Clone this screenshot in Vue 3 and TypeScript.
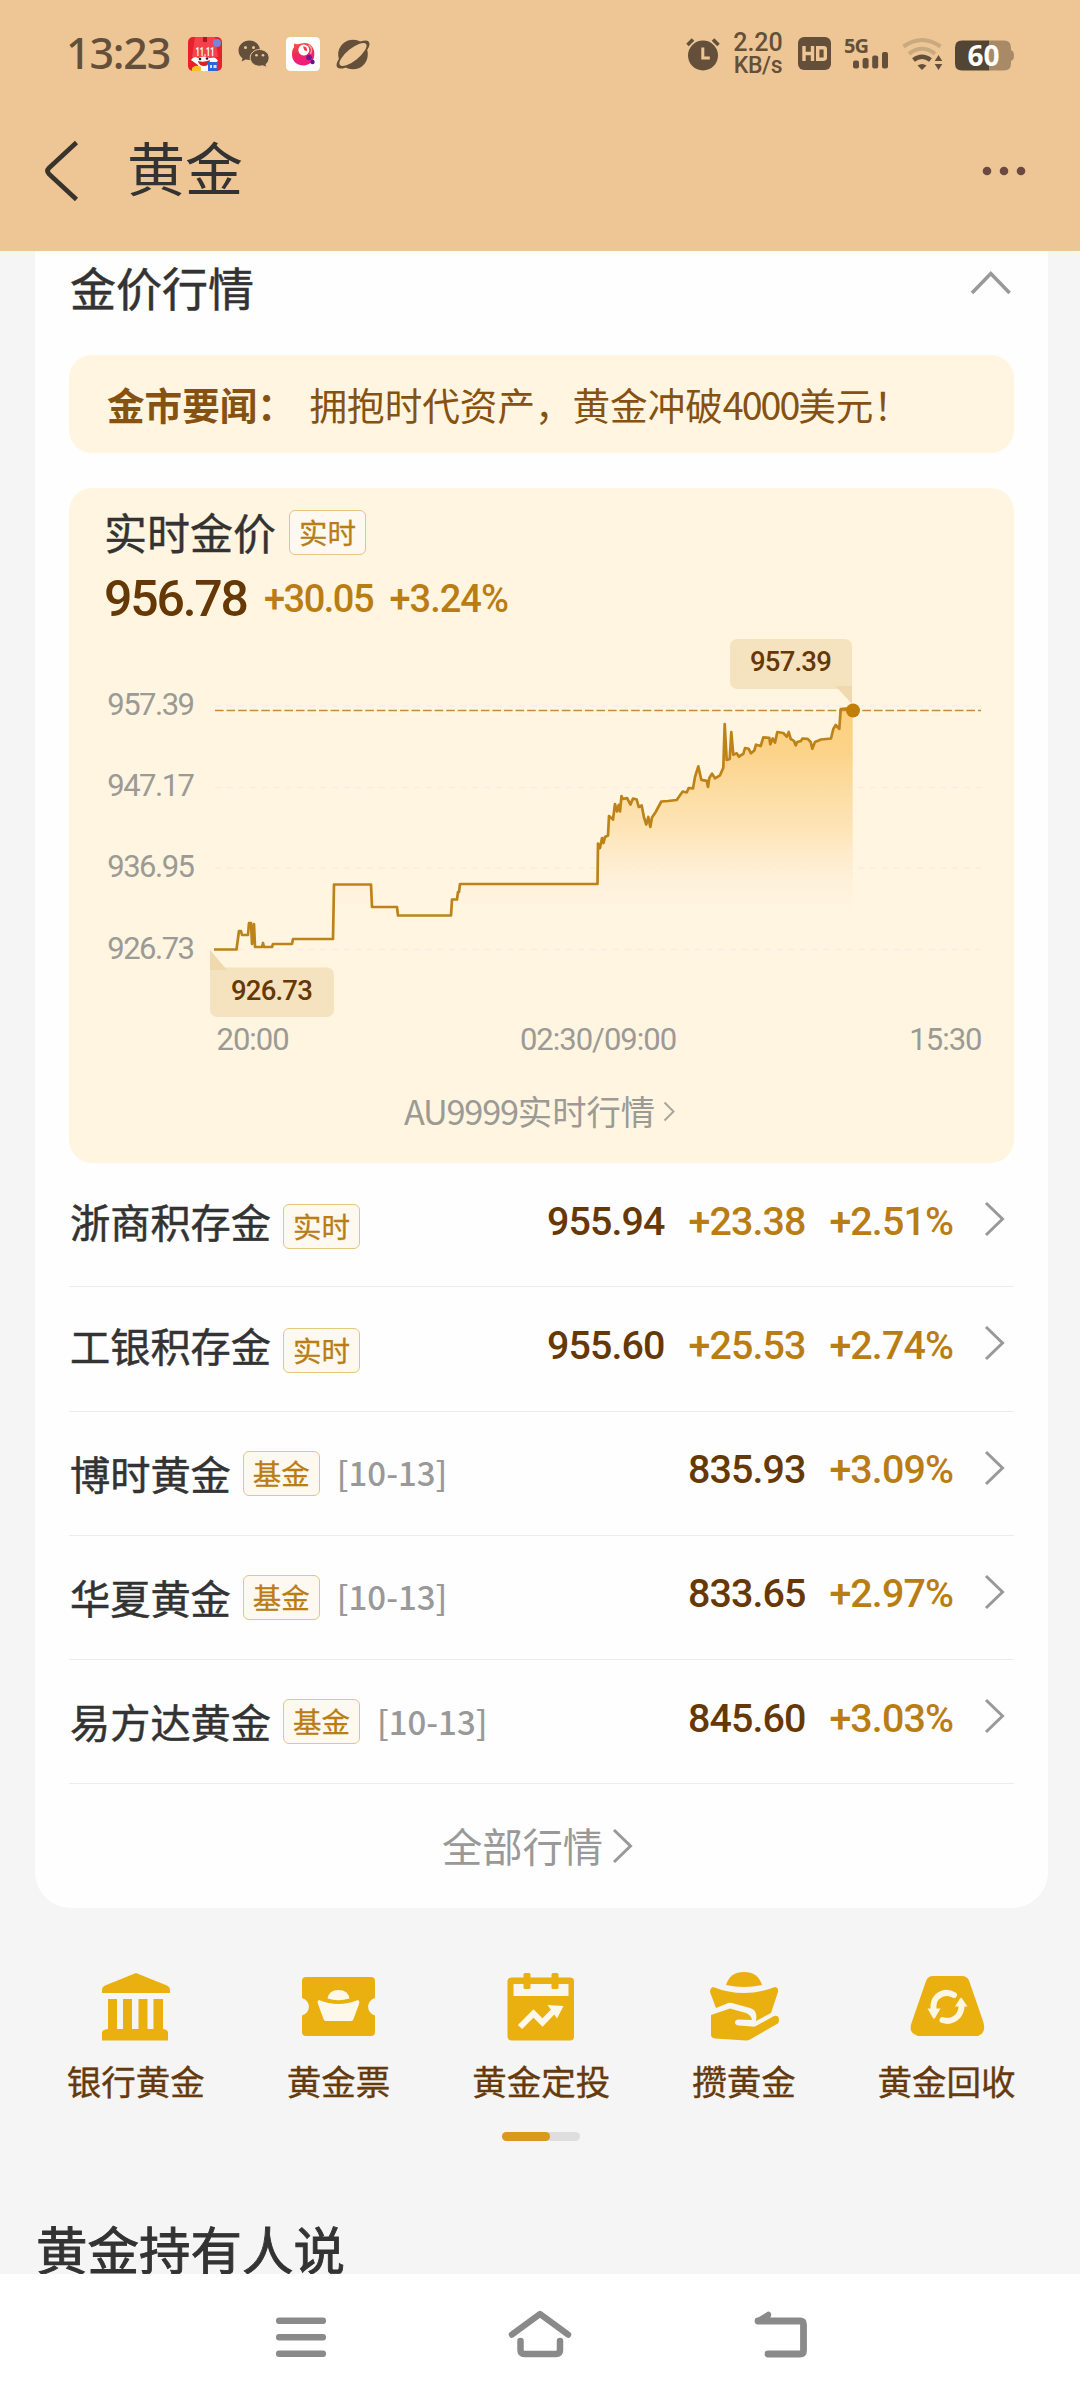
<script setup lang="ts">
interface Quote {
  name: string
  tag: string
  date?: string
  price: string
  change?: string
  percent: string
}

const quotes: Quote[] = [
  { name: '浙商积存金', tag: '实时', price: '955.94', change: '+23.38', percent: '+2.51%' },
  { name: '工银积存金', tag: '实时', price: '955.60', change: '+25.53', percent: '+2.74%' },
  { name: '博时黄金', tag: '基金', date: '[10-13]', price: '835.93', percent: '+3.09%' },
  { name: '华夏黄金', tag: '基金', date: '[10-13]', price: '833.65', percent: '+2.97%' },
  { name: '易方达黄金', tag: '基金', date: '[10-13]', price: '845.60', percent: '+3.03%' },
]

const yLabels = [
  { text: '957.39', y: 714.5 },
  { text: '947.17', y: 795.5 },
  { text: '936.95', y: 876.5 },
  { text: '926.73', y: 958.5 },
]
const gridLines: number[] = [706, 787.5, 868.3, 949.5]

const points: [number, number][] = [
  [214, 949.5], [236.5, 949.5], [239, 931], [241, 931], [242, 935], [248, 935], [249, 923], [251, 923],
  [252, 944], [254, 924], [255, 947], [262, 947], [263, 943], [264, 947], [272, 947], [273, 944],
  [292, 944], [293, 939], [333, 939], [334, 884.5], [371, 884.5], [372, 907], [397, 907], [398, 915.5],
  [451, 915.5], [452, 899.5], [457, 899.5], [458, 892], [459, 892], [460, 884], [597.5, 884],
  [598, 843.5], [600, 848], [602, 838], [603.5, 843], [605, 837], [608, 835.5], [609, 816], [613, 819.5],
  [615, 804], [617, 811.5], [618.7, 805], [620, 811.5], [621.5, 796], [623, 799], [627, 798],
  [630.5, 804.5], [633, 798.5], [636.7, 799.5], [638.7, 807], [641.7, 805.5], [644, 817.5],
  [646.3, 824.5], [648.3, 817], [650.3, 827], [652, 817.5], [655.7, 812], [661.3, 801.5], [668, 801],
  [676.7, 800], [680, 795.3], [682.7, 791.5], [686.7, 792.5], [688.7, 788], [693, 788.4], [695, 777],
  [698.3, 766.4], [701.3, 779.8], [706.7, 780.8], [708, 787], [709.3, 778], [712, 773.6], [715, 778.4],
  [720, 775.3], [723.3, 767.7], [724.7, 724], [726.7, 760], [729.7, 759], [731.3, 732], [733.3, 754.7],
  [736.7, 753.3], [739, 756.7], [741.7, 754.7], [743.3, 754], [745, 748], [748.7, 748.8], [751, 753.3],
  [754.3, 750.5], [756, 744.7], [760.7, 746], [763.3, 737.4], [769.3, 737.8], [770.3, 744.3],
  [772.7, 738.5], [775, 742.6], [777.3, 732], [783.3, 733], [786.7, 736.7], [788.7, 732], [790.7, 738.8],
  [794, 741], [795.7, 745.3], [797.3, 742], [801, 741], [802.3, 738.5], [807.7, 738.8], [810.7, 742],
  [812.3, 748.8], [815, 742], [821, 739.5], [831, 738.5], [833.3, 729], [835.7, 725], [839.3, 728.8],
  [840.7, 709.2], [846, 708.5], [852.7, 710],
]
const line = points.map((p) => p.join(',')).join(' ')
const area = `214,949.5 ${line} 852.7,949.5`

const services: { icon: string; label: string }[] = [
  { icon: 'bank', label: '银行黄金' },
  { icon: 'ticket', label: '黄金票' },
  { icon: 'plan', label: '黄金定投' },
  { icon: 'save', label: '攒黄金' },
  { icon: 'recycle', label: '黄金回收' },
]
</script>

<template>
  <div class="screen">
    <header class="header">
      <div class="status">
        <span class="clock">13:23</span>
        <svg class="s-app" width="34" height="34" viewBox="0 0 34 34">
          <rect width="34" height="34" rx="5" fill="#e8202b" />
          <path d="M7 0h20l3 20H4z" fill="#f4414a" />
          <circle cx="29" cy="6" r="4" fill="#7d83d6" />
          <path d="M15 0h4v5h-4z" fill="#b01522" />
          <text x="17" y="18.500" text-anchor="middle" font-size="12" font-weight="700" fill="#fff" font-family="Roboto, sans-serif" textLength="19" lengthAdjust="spacingAndGlyphs">11.11</text>
          <path d="M3 23q3-5 7-2q6-3 12 0q6-2 8 3l-6 4l-1 6H11l-1-6z" fill="#fff" />
          <path d="M10 24q6 2 12-1q-1 6-6 6t-6-5z" fill="#d9202c" />
          <circle cx="12" cy="22" r="1.300" fill="#222" /><circle cx="19" cy="21.500" r="1.300" fill="#222" />
          <path d="M4 34v-3q4-4 9-1v4z" fill="#f9c22b" />
          <path d="M20 25h10v9H20z" fill="#2a66d8" />
          <path d="M22 28h2v3h-2zM25.500 28h3v3h-3z" fill="#d6e4ff" />
        </svg>
        <svg class="s-wechat" width="32" height="28" viewBox="0 0 32 28">
          <path d="M11.500 0.500C5.200 0.500 0.500 5 0.500 10.500c0 3.300 1.600 5.900 4 7.700L3.600 21.500l4-2c1.200.3 2.500.5 3.900.5C17.700 20 22 16 22 10.500S17.700.5 11.500.5z" fill="#64503a" />
          <path d="M21.500 9.500c-5.200 0-9.300 3.600-9.300 8.300s4.100 8.400 9.300 8.400c1.200 0 2.200-.2 3.200-.5l4 1.800-.8-3c2-1.600 3.200-3.900 3.200-6.700 0-4.700-4.300-8.300-9.600-8.300z" fill="#64503a" stroke="#eec695" stroke-width="1" />
          <g fill="#eec695"><circle cx="7.500" cy="7.500" r="1.500" /><circle cx="15.500" cy="7.500" r="1.500" /><circle cx="18.500" cy="15.200" r="1.300" /><circle cx="25" cy="15.200" r="1.300" /></g>
        </svg>
        <svg class="s-tv" width="34" height="34" viewBox="0 0 34 34">
          <defs><linearGradient id="tv" x1="0" y1="0" x2="0.300" y2="1"><stop offset="0" stop-color="#f0603c" /><stop offset="0.500" stop-color="#ee2a58" /><stop offset="1" stop-color="#ef1c86" /></linearGradient></defs>
          <rect width="34" height="34" rx="4.500" fill="#fff" />
          <path d="M8 6.500q3 1 5 .6q12-4 15 6.500q2 13-9.500 15Q6 28 6 17q0-5 2-6.500z" fill="url(#tv)" />
          <path d="M13.500 16.500a5.500 5.500 0 1 1 5 2q-3 .5-5-2z" fill="#fff" />
          <path d="M17 9.500q4.500-.5 4 4.500l-2.500-.5z" fill="#e6413f" />
          <path d="M22.500 8q5 3 2 9" fill="none" stroke="#f9a38a" stroke-width="1.500" />
          <circle cx="23" cy="20.500" r="2.800" fill="#6d1a8c" /><circle cx="26.500" cy="25" r="2.200" fill="#5b1a86" />
        </svg>
        <svg class="s-planet" width="34" height="32" viewBox="0 0 34 32">
          <circle cx="17" cy="15.500" r="14.800" fill="#64503a" />
          <g transform="rotate(-39 17 15.500)">
            <ellipse cx="17" cy="15.500" rx="20.300" ry="7.500" fill="#64503a" />
            <ellipse cx="17" cy="15.500" rx="16.800" ry="6" fill="#eec695" />
          </g>
        </svg>
        <span class="spacer"></span>
        <svg class="s-alarm" width="34" height="34" viewBox="0 0 34 34">
          <circle cx="17" cy="18.500" r="15" fill="#64503a" />
          <path d="M1.500 8L7 2.500M32.500 8L27 2.500" stroke="#64503a" stroke-width="3.600" />
          <path d="M16.800 10.500v10.500h7" fill="none" stroke="#eec695" stroke-width="3" />
        </svg>
        <div class="speed"><span>2.20</span><span class="unit">KB/s</span></div>
        <svg class="s-hd" width="33" height="33" viewBox="0 0 33 33">
          <rect width="33" height="33" rx="6" fill="#64503a" />
          <path d="M6 9v15M14.500 9v15M6 16.500h8.500" stroke="#eec695" stroke-width="3.400" fill="none" />
          <path d="M19.700 10.800h6q1.600 0 1.600 1.600v8.200q0 1.600-1.600 1.600h-6z" stroke="#eec695" stroke-width="3.400" fill="none" />
        </svg>
        <div class="signal">
          <span class="fiveg">5G</span>
          <svg width="36" height="17" viewBox="0 0 36 17"><g fill="#64503a"><rect x="0" y="8.500" width="6" height="8" rx="2" /><rect x="9.600" y="6" width="6" height="10.500" rx="2" /><rect x="19.200" y="3.500" width="6" height="13" rx="2" /><rect x="29" y="0" width="6" height="16.500" rx="2" /></g></svg>
        </div>
        <svg class="s-wifi" width="41" height="33" viewBox="0 0 41 33">
          <g fill="none" stroke="#c9aa80" stroke-width="4"><path d="M1.500 8.500Q20 -4.500 38.500 8.500" /><path d="M7 15.800Q20 5.800 33 15.800" /></g>
          <path d="M11.500 22Q20 15.500 28.500 22" fill="none" stroke="#64503a" stroke-width="4.500" />
          <path d="M15.500 27.500q4.500-3 9 0L20 32z" fill="#64503a" />
          <path d="M36.500 17l3.800 6h-7.600zM36.500 32l3.800-6h-7.600z" fill="#64503a" />
        </svg>
        <svg class="s-battery" width="60" height="31" viewBox="0 0 60 31">
          <path d="M33 .5h16q7 0 7 7V10q3 1 3 5.500T56 21v2.500q0 7-7 7H33z" fill="#a98a67" />
          <path d="M7 .5h27v30H7q-7 0-7-7v-16q0-7 7-7z" fill="#524533" />
          <text x="28.500" y="25.500" text-anchor="middle" font-family="'Noto Sans', sans-serif" font-weight="700" font-size="28" fill="#fff">60</text>
        </svg>
      </div>
      <div class="navbar">
        <svg width="36" height="60" viewBox="0 0 36 60"><path d="M32.500 1.500L5 27q-3 3 0 6L32.500 58.500" fill="none" stroke="#38342c" stroke-width="4.600" /></svg>
        <h1>黄金</h1>
        <svg class="dots" width="44" height="10" viewBox="0 0 44 10"><g fill="#6a4a40"><circle cx="5" cy="5" r="4.300" /><circle cx="22" cy="5" r="4.300" /><circle cx="39" cy="5" r="4.300" /></g></svg>
      </div>
    </header>

    <main class="content">
      <section class="card">
        <div class="card-head">
          <h2>金价行情</h2>
          <svg width="42" height="26" viewBox="0 0 42 26"><path d="M2 23L20.800 3.500L39.600 23" fill="none" stroke="#999" stroke-width="3.600" /></svg>
        </div>

        <div class="news"><b>金市要闻：</b><span>拥抱时代资产，黄金冲破<i>4000</i>美元！</span></div>

        <div class="gold">
          <div class="gold-title"><span>实时金价</span><em class="tag">实时</em></div>
          <div class="gold-price"><strong>956.78</strong><span>+30.05</span><span>+3.24%</span></div>
          <svg class="chart" width="945" height="430" viewBox="69 630 945 430">
            <defs>
              <linearGradient id="fill" gradientUnits="userSpaceOnUse" x1="0" y1="710" x2="0" y2="949">
                <stop offset="0" stop-color="#fcd07c" />
                <stop offset="0.180" stop-color="#fcd38a" />
                <stop offset="0.500" stop-color="#fde2b0" stop-opacity="0.850" />
                <stop offset="0.720" stop-color="#feefd9" stop-opacity="0.700" />
                <stop offset="0.880" stop-color="#fff5e1" stop-opacity="0.100" />
                <stop offset="1" stop-color="#fff5e1" stop-opacity="0" />
              </linearGradient>
            </defs>
            <text v-for="l in yLabels" :key="l.text" class="axis price" x="193.500" :y="l.y" text-anchor="end">{{ l.text }}</text>
            <line v-for="y in gridLines" :key="y" class="grid" x1="215" x2="981" :y1="y" :y2="y" />
            <polygon :points="area" fill="url(#fill)" />
            <line class="peak" x1="215" x2="981" y1="710.500" y2="710.500" />
            <polyline :points="line" class="trend" />
            <path d="M738 639H844Q852 639 852 647V689H738Q730 689 730 681V647Q730 639 738 639Z" class="tip" />
            <path d="M835.500 686H852V704Z" class="tip-tail" />
            <text class="tip-text" x="790.500" y="671" text-anchor="middle">957.39</text>
            <circle cx="853" cy="710.500" r="7" fill="#c17f08" />
            <path d="M210 967.500H326Q334 967.500 334 975.500V1009Q334 1017 326 1017H218Q210 1017 210 1009Z" class="tip" />
            <path d="M210 950L227 970H210Z" class="tip-tail" />
            <text class="tip-text" x="271.500" y="1000" text-anchor="middle">926.73</text>
            <text class="axis" x="216.500" y="1049.500">20:00</text>
            <text class="axis" x="598" y="1049.500" text-anchor="middle">02:30/09:00</text>
            <text class="axis" x="981.500" y="1049.500" text-anchor="end">15:30</text>
          </svg>
          <div class="gold-link">
            <span>AU9999</span>实时行情
            <svg width="13" height="21" viewBox="0 0 13 21"><path d="M1.500 1.500L10.500 10.500L1.500 19.500" fill="none" stroke="#aaa69c" stroke-width="2" /></svg>
          </div>
        </div>

        <ul class="quotes">
          <li v-for="q in quotes" :key="q.name" :class="{ fund: q.date }">
            <span class="name">{{ q.name }}</span>
            <em class="tag">{{ q.tag }}</em>
            <span v-if="q.date" class="date">{{ q.date }}</span>
            <span class="figures">
              <b>{{ q.price }}</b>
              <span v-if="q.change">{{ q.change }}</span>
              <span>{{ q.percent }}</span>
              <svg width="21" height="36" viewBox="0 0 21 36"><path d="M2 2L18.500 18L2 34" fill="none" stroke="#999" stroke-width="3" /></svg>
            </span>
          </li>
        </ul>

        <div class="all">
          <span>全部行情</span>
          <svg width="21" height="36" viewBox="0 0 21 36"><path d="M2 2L18.500 18L2 34" fill="none" stroke="#999" stroke-width="3" /></svg>
        </div>
      </section>

      <nav class="services">
        <div v-for="s in services" :key="s.label" class="service">
          <svg width="76" height="72" viewBox="0 0 76 72">
            <g v-if="s.icon === 'bank'" fill="#eab00f">
              <path d="M38 2L69 14.500q3 1.500 3 4V22H4v-3.500q0-2.500 3-4z" />
              <path d="M10 28h9v30h6V28h9v30h6.500V28h9v30h6V28H65v30q5 .5 5 4v7.500H4V62q0-3.500 6-4z" />
            </g>
            <template v-else-if="s.icon === 'ticket'">
              <path d="M5 6H70q4 0 4 4V27a9 9 0 0 0 0 17.500V61q0 4-4 4H5q-4 0-4-4V44.500a9 9 0 0 0 0-17.500V10q0-4 4-4z" fill="#eab00f" />
              <path d="M26.500 27.500Q28 19 37.500 19T48.500 27.500Q37 31 26.500 27.500z" fill="#fdf8ea" />
              <path d="M18 29Q37 37 57 29Q59 30 58 33L52.500 48Q52 50 50 50H25Q23 50 22.500 48L17 33Q16 30 18 29z" fill="#fdf8ea" />
            </template>
            <template v-else-if="s.icon === 'plan'">
              <path d="M8.500 6.500H67q4 0 4 4V65.500q0 4-4 4H8.500q-4 0-4-4V10.500q0-4 4-4z" fill="#eab00f" />
              <rect x="10.500" y="13" width="55" height="12" fill="#f8f6ee" />
              <rect x="20.500" y="2" width="7" height="16" rx="1.500" fill="#eab00f" /><rect x="48.500" y="2" width="7" height="16" rx="1.500" fill="#eab00f" />
              <path d="M17 56L30.500 42.500L39.500 51.500L52.500 38" fill="none" stroke="#fdf8ea" stroke-width="6" />
              <path d="M44.500 34L60.500 35L54 47.500z" fill="#fdf8ea" />
            </template>
            <g v-else-if="s.icon === 'save'" fill="#eab00f">
              <path d="M20 14Q24 1 38 1T56 14Q38 18 20 14z" />
              <path d="M7 16Q38 28 69 16Q73 17 72 21L65 42L50 50Q52 39 44 37L26 32Q23 31 20 33L10 37L4 21Q4 17 7 16z" />
              <path d="M5 44L24 37.500L40 42Q45 44 46 49L32 48.500Q29 49 29 51.500T33 54.500L46 55.500Q48 56 50 55L68 45Q73 44 73 49Q73 52 71 53L44 68.500Q42 69.500 40 69.500L9 67.500Q5 66.500 5 64z" />
            </g>
            <template v-else>
              <path d="M24 5H53Q58 5 60 9.500L74 50Q78 62 69 65H9Q-1 62 2.500 52L17 10Q19 5 24 5z" fill="#eab00f" />
              <g fill="none" stroke="#fdf6e2" stroke-width="6" stroke-linecap="round">
                <path d="M45 24Q36 19 28 26Q24 30 24.500 38" />
                <path d="M33.500 49Q42 52 49 45Q53 40 52.500 33" />
              </g>
              <path d="M18.500 37.500H31.500L26 47Q25 48 24 47zM46 35.500H58.500L53 27.500Q52 26 51 27.500z" fill="#fdf6e2" />
            </template>
          </svg>
          <span>{{ s.label }}</span>
        </div>
      </nav>
      <div class="pager"><i></i></div>
      <h2 class="voices">黄金持有人说</h2>
    </main>

    <footer class="system">
      <svg width="52" height="50" viewBox="0 0 52 50"><g fill="#8a8a8a"><rect x="1" y="5.500" width="50" height="6.500" rx="3" /><rect x="1" y="22" width="50" height="6.500" rx="3" /><rect x="1" y="38.500" width="50" height="6.500" rx="3" /></g></svg>
      <svg width="66" height="50" viewBox="0 0 66 50"><g fill="none" stroke="#8a8a8a" stroke-width="6.500" stroke-linecap="round" stroke-linejoin="round"><path d="M5 22.500L33 2L61 22.500" /><path d="M13.500 29V38Q13.500 42 17.500 42H49Q53 42 53 38V29" stroke-linejoin="miter" /></g></svg>
      <svg width="56" height="50" viewBox="0 0 56 50"><path d="M5 9H47Q50.500 9 50.500 12.500V38.500Q50.500 42 47 42H15" fill="none" stroke="#8a8a8a" stroke-width="6.800" stroke-linecap="round" /><path d="M2 7.500L15 -.5Q19 0 18 4L15 11H4z" fill="#8a8a8a" /></svg>
    </footer>
  </div>
</template>

<style>
body { margin: 0; background: #f5f5f5; }
</style>

<style scoped>
.screen {
  width: 1080px;
  height: 2400px;
  overflow: hidden;
  display: flex;
  flex-direction: column;
  background: #f5f5f5;
  color: #333;
  font-family: 'Noto Sans CJK SC', sans-serif;
}
h1, h2, ul { margin: 0; padding: 0; }
em, i { font-style: normal; }
svg { display: block; flex: none; overflow: visible; }

.header { height: 251px; flex: none; background: #eec695; }
.status { display: flex; align-items: flex-start; height: 106px; padding: 0 65px 0 66px; color: #64503a; }
.clock { font: 500 43px/60px 'Noto Sans', sans-serif; letter-spacing: -1.200px; width: 122px; margin-top: 23px; }
.s-app { margin-top: 36.500px; }
.s-wechat { margin: 40px 0 0 16px; }
.s-tv { margin: 36.500px 0 0 16px; }
.s-planet { margin: 39px 0 0 16px; }
.spacer { flex: 1; }
.s-alarm { margin-top: 37px; }
.speed { display: flex; flex-direction: column; align-items: center; width: 52px; margin: 32px 1px 0 12px; font: 500 25px/22.500px Roboto, sans-serif; }
.speed .unit { font-size: 23px; letter-spacing: -.3px; }
.s-hd { margin: 37px 0 0 13px; }
.signal { width: 46px; margin: 36px 0 0 13px; display: flex; flex-direction: column; align-items: flex-end; }
.fiveg { align-self: flex-start; font: 700 20px/16px 'Noto Sans', sans-serif; letter-spacing: -1px; margin-top: 2px; }
.signal svg { margin-top: -2px; margin-right: 1px; }
.s-wifi { margin: 38px 0 0 12px; }
.s-battery { margin: 39.500px 0 0 12px; }

.navbar { display: flex; align-items: center; height: 129px; padding: 0 54px 0 44px; }
.navbar h1 { font-size: 58px; line-height: 70px; font-weight: 400; margin: -9px 0 0 47px; }
.dots { margin-left: auto; }

.content { height: 2023px; flex: none; overflow: hidden; }
.card { box-sizing: border-box; height: 1657px; margin: 0 32px 0 35px; padding: 0 34px; background: #fefefe; border-radius: 0 0 36px 36px; }
.card-head { display: flex; justify-content: space-between; height: 104px; }
.card-head h2 { font-size: 46px; font-weight: 400; line-height: 60px; margin: 5px 0 0 1px; -webkit-text-stroke: .5px #333; }
.card-head svg { margin: 19px 2px 0 0; }

.news { box-sizing: border-box; height: 98px; padding-left: 38px; background: #fff5e1; border-radius: 23px; color: #865211; font-size: 37.600px; line-height: 97px; white-space: nowrap; display: flex; }
.news b { font-weight: 700; width: 202.500px; }
.news span { font-weight: 400; }
.news i { letter-spacing: -2px; }

.gold { height: 675px; margin-top: 35px; background: #fff5e1; border-radius: 23px; display: flex; flex-direction: column; }
.gold-title { display: flex; align-items: center; height: 50px; padding: 19px 0 0 35px; font-size: 43px; line-height: 50px; }
.gold-title span { margin-top: -3px; -webkit-text-stroke: .4px #333; }
.gold-title .tag { margin-left: 13px; }
.tag { box-sizing: border-box; width: 77px; height: 45px; border: 1px solid #e3c680; border-radius: 6px; background: #fdf9f0; color: #b97d14; font-size: 28.500px; line-height: 41px; text-align: center; flex: none; -webkit-text-stroke: .3px #b97d14; }
.gold-price { box-sizing: border-box; display: flex; align-items: center; height: 73px; padding: 12px 0 0 35px; color: #b97d14; font-family: Roboto, sans-serif; font-weight: 500; line-height: 61px; }
.gold-price strong { width: 160px; font-size: 50px; font-weight: 500; letter-spacing: -2.200px; color: #663806; }
.gold-price span { width: 125.500px; font-size: 38px; letter-spacing: -1.500px; }
.gold-price span:last-child { letter-spacing: -1px; }
.chart { font-family: Roboto, sans-serif; }
.axis { font-size: 31px; fill: #9c9a95; letter-spacing: -1px; }
.axis.price { letter-spacing: -1.500px; }
.grid { stroke: #f6ede6; stroke-width: 1.500; stroke-dasharray: 6 5.700; }
.peak { stroke: #c18f3a; stroke-width: 1.600; stroke-dasharray: 8.600 2.960; }
.trend { fill: none; stroke: #bd8319; stroke-width: 2.700; stroke-linejoin: round; }
.tip { fill: #f5e2be; }
.tip-tail { fill: #f0d9ac; }
.tip-text { font-size: 27.500px; font-weight: 500; fill: #663806; letter-spacing: -.8px; }
.gold-link { display: flex; align-items: center; justify-content: center; height: 100px; padding-right: 3px; font-size: 34.300px; color: #9c9a95; }
.gold-link span { letter-spacing: -1.200px; }
.gold-link svg { margin: 3px 0 0 8px; }

.quotes { list-style: none; }
.quotes li { box-sizing: border-box; display: flex; align-items: center; height: 124.250px; border-bottom: 1px solid #ececec; }
.name { margin: -7px 0 0 1px; font-size: 40.200px; line-height: 60px; font-weight: 400; -webkit-text-stroke: .5px #333; }
.quotes .tag { margin: 4px 0 0 12px; }
.fund .name { margin-top: -1px; }
.fund .tag { margin-top: 0; }
.date { margin-left: 17px; font-size: 33px; font-weight: 500; color: #999; line-height: 50px; margin-top: -2px; }
.figures { display: flex; align-items: center; gap: 24px; margin: -6px 9px 0 auto; font: 500 39.400px/50px Roboto, sans-serif; letter-spacing: -.9px; color: #b97d14; }
.figures b { font-weight: 500; color: #663806; }
.figures svg { margin: -5px 0 0 7px; }

.all { display: flex; align-items: center; justify-content: center; gap: 9px; height: 125px; padding-right: 8px; font-size: 40.300px; color: #999; }
.all span { margin-top: -4px; }
.all svg { margin-top: -2px; }

.services { display: flex; height: 224px; padding: 0 32px 0 34.500px; }
.service { width: 202.700px; padding-top: 63px; display: flex; flex-direction: column; align-items: center; }
.service span { margin-top: 12px; font-size: 34.500px; line-height: 50px; color: #663a0d; -webkit-text-stroke: .4px #663a0d; }
.pager { width: 78px; height: 9px; margin: 0 auto; border-radius: 5px; background: #dedede; transform: translateX(1px); }
.pager i { display: block; width: 48px; height: 9px; border-radius: 5px; background: #d9991a; }
.voices { margin: 69px 0 0 36px; font-size: 51.500px; line-height: 76px; font-weight: 400; -webkit-text-stroke: .9px #333; }

.system { box-sizing: border-box; flex: 1; display: flex; align-items: flex-start; padding: 38px 271px 0 275px; justify-content: space-between; background: #fff; }
</style>
